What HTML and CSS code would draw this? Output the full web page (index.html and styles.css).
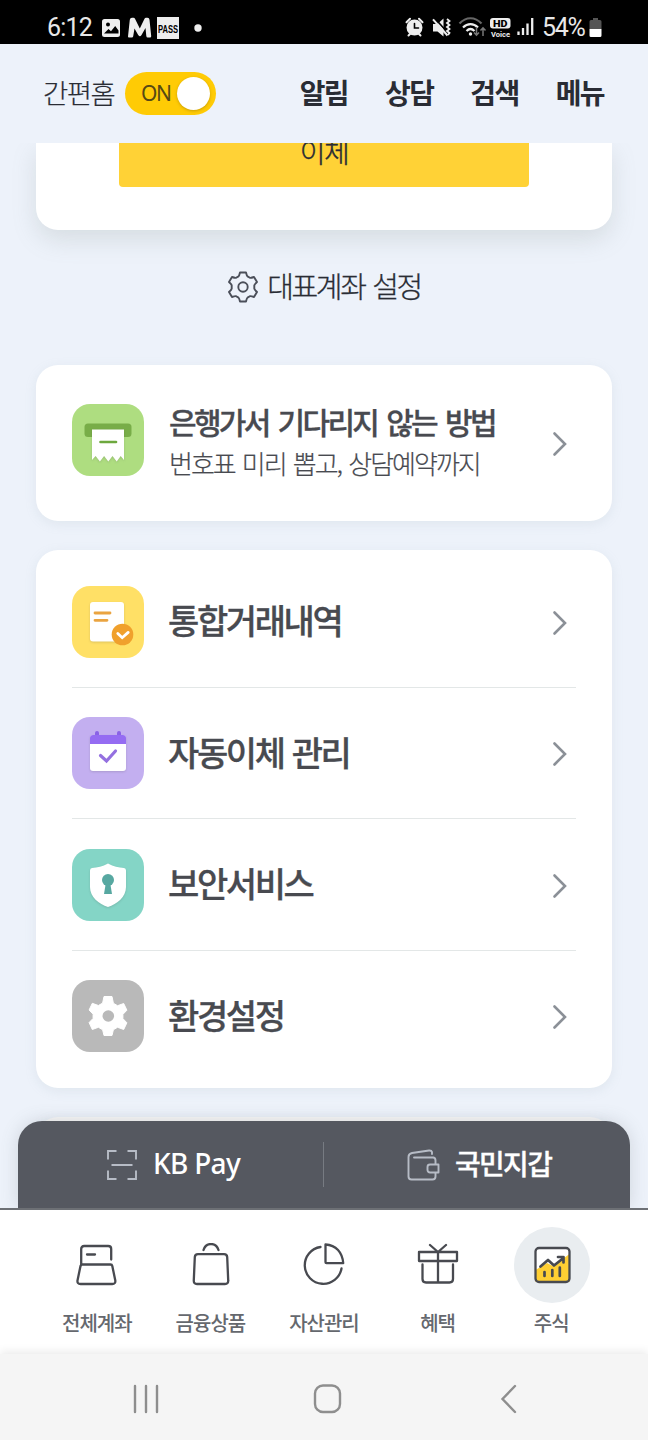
FILE: index.html
```
<!DOCTYPE html>
<html lang="ko">
<head>
<meta charset="utf-8">
<title>간편홈</title>
<link rel="stylesheet" href="styles.css">
</head>
<body>
<div class="phone">
  <div class="status">
    <span class="status-text clock">6:12</span>
    <svg class="status-left" width="110" height="24" viewBox="0 0 110 24">
      <rect x="1" y="3" width="18" height="18" rx="2.5" fill="#eee"/>
      <circle cx="7" cy="8.500" r="2" fill="#000"/>
      <path d="M3 17.500 7.500 13l2.500 2.200 4.200-5.200 3.300 4.500v3z" fill="#000"/>
      <path d="M27 20.500 28.800 3.800q.3-2 2.200-2h1.500q1 0 1.500 1L38.800 12.500 43.500 2.800q.5-1 1.500-1h1.500q1.800 0 2 2L50.200 20q.2 1.500-1.300 1.500h-2.200q-1.200 0-1.400-1.500L44.500 12l-4 7q-1.500 2.500-3.300 0L33.500 12.500 32.200 20.300q-.2 1.200-1.400 1.200H28q-1.100 0-1-1z" fill="#eee"/>
      <rect x="56" y="1" width="22" height="22" fill="#eee"/>
      <text x="57" y="16.500" class="pass" textLength="20" lengthAdjust="spacingAndGlyphs">PASS</text>
      <circle cx="97" cy="12" r="3.700" fill="#eee"/>
    </svg>
    <svg class="status-right" width="130" height="24" viewBox="0 0 130 24">
      <g stroke="#eee" fill="none" stroke-width="2" stroke-linecap="round">
        <circle cx="9.500" cy="11.500" r="7" fill="#eee"/>
        <path d="M1.500 6.200 5 2.800M17.500 6.200 14 2.800M3.500 19.500l2-2M15.500 19.500l-2-2"/>
        <path d="M9.500 7.500v4.500h4" stroke="#000" stroke-width="1.600"/>
      </g>
      <path d="M28 8h4.500l6-5.500v18l-6-5H28z" fill="#eee"/>
      <path d="M29.500 2 43.500 17.500" stroke="#000" stroke-width="1.800"/>
      <path d="M28 3.300 42.500 19.500" stroke="#eee" stroke-width="2"/>
      <path d="M42 3l2.500 2-2.500 2 2.500 2-2.500 2 2.500 2-2.500 2 2.500 2-1.500 2" stroke="#eee" stroke-width="1.800" fill="none"/>
      <g fill="none" stroke-width="2.200">
        <path d="M54.500 7.500C61 .5 70 .5 76.500 7.500" stroke="#666"/>
        <path d="M58 11.500c4.500-4.500 10.500-4.500 15 0M61.500 15c2.500-2.500 5.500-2.500 8 0" stroke="#eee"/>
        <path d="M71.500 11v8m-2.500-2.500 2.500 2.700 2.500-2.700M78 20v-8m-2.500 2.500 2.500-2.700 2.500 2.700" stroke="#777" stroke-width="1.500"/>
      </g>
      <circle cx="65.500" cy="18" r="1.700" fill="#eee"/>
      <rect x="85" y="2" width="20.500" height="10.500" rx="3" fill="#eee"/>
      <text x="88" y="10.600" class="hd" textLength="14.500" lengthAdjust="spacingAndGlyphs">HD</text>
      <text x="86" y="20.500" class="voice" textLength="19" lengthAdjust="spacingAndGlyphs">Voice</text>
      <path d="M113.500 19v-3.500M118 19v-7M122.500 19V7.500M127.200 19V2" stroke="#eee" stroke-width="2.300"/>
    </svg>
    <span class="status-text percent">54%</span>
    <svg class="battery" width="13" height="20" viewBox="0 0 13 20"><path d="M4 0h5v2H4zM2 2h9a1.500 1.500 0 0 1 1.500 1.500V11H.5V3.500A1.500 1.500 0 0 1 2 2z" fill="#555"/><path d="M.5 11h12v6.500A1.500 1.500 0 0 1 11 19H2a1.500 1.500 0 0 1-1.500-1.500z" fill="#fff"/></svg>
  </div>

  <header class="header">
    <span class="mode">간편홈</span>
    <div class="toggle"><span class="toggle-label">ON</span><span class="knob"></span></div>
    <nav class="top-menu"><span>알림</span><span>상담</span><span>검색</span><span>메뉴</span></nav>
  </header>

  <main class="content">
    <section class="account-card"><div class="transfer"><span>이체</span></div></section>
    <div class="account-setting">
      <svg width="32" height="32" viewBox="0 0 32 32" fill="none" stroke="#4b4f59" stroke-width="1.900" stroke-linejoin="round">
        <path d="M13 1.500h6q.8 3.300 1.500 3.900l2.400 1.400q1 .3 4.100-.8l3 5q-2.600 2.500-2.700 3.400v3.200q.1 1 2.700 3.400l-3 5q-3.100-1.100-4.100-.8l-2.400 1.400q-.7.600-1.500 3.900h-6q-.8-3.300-1.500-3.900l-2.400-1.400q-1-.3-4.100.8l-3-5q2.600-2.400 2.700-3.400v-3.200q-.1-.9-2.700-3.400l3-5q3.100 1.100 4.100.8l2.400-1.400q.7-.6 1.500-3.900z"/><circle cx="16" cy="16" r="4.700"/>
      </svg>
      <span>대표계좌 설정</span>
    </div>

    <section class="card promo">
      <svg class="tile" viewBox="0 0 72 72">
        <rect width="72" height="72" rx="18" fill="#aedd80"/>
        <rect x="12.500" y="19.500" width="47" height="13.500" rx="3.500" fill="#78ad48"/>
        <path class="soft" d="M20 25.500h32V56l-3.300-4-4 5.500-4.200-5.500-4.200 5.500-4.200-5.500-4.200 5.500-4.300-5.500-3.600 4z" fill="#fff"/>
        <path d="M28.500 38H44" stroke="#6da83e" stroke-width="2.600" stroke-linecap="round"/>
      </svg>
      <div class="promo-text"><strong>은행가서 기다리지 않는 방법</strong><span>번호표 미리 뽑고, 상담예약까지</span></div>
      <svg class="chevron" viewBox="0 0 16 26"><path d="M2.500 2.500 13 13 2.500 23.500"/></svg>
    </section>

    <section class="card menu">
      <div class="row">
        <svg class="tile" viewBox="0 0 72 72">
          <rect width="72" height="72" rx="18" fill="#ffe066"/>
          <rect class="soft" x="18" y="16" width="34" height="39.500" rx="3" fill="#fff"/>
          <path d="M23 27h15M23 34.300h12" stroke="#eaa441" stroke-width="2.800" stroke-linecap="round"/>
          <circle cx="50.500" cy="48.500" r="10.800" fill="#f0a02c"/>
          <path d="m45.800 47.500 4.400 4.200 6-5.300" fill="none" stroke="#fff" stroke-width="2.800" stroke-linecap="round"/>
        </svg>
        <span>통합거래내역</span><svg class="chevron" viewBox="0 0 16 26"><path d="M2.500 2.500 13 13 2.500 23.500"/></svg>
      </div>
      <div class="row">
        <svg class="tile" viewBox="0 0 72 72">
          <rect width="72" height="72" rx="18" fill="#c3aff0"/>
          <rect class="soft" x="18" y="18" width="36" height="36" rx="3" fill="#fff"/>
          <path d="M25 16v5M47 16v5" stroke="#8a62e6" stroke-width="4" stroke-linecap="round"/>
          <path d="M18 27v-6a3 3 0 0 1 3-3h30a3 3 0 0 1 3 3v6z" fill="#956cf2"/>
          <path d="m28.500 38.500 6 5.500L43.500 34" fill="none" stroke="#9470e0" stroke-width="3.200" stroke-linecap="round"/>
        </svg>
        <span>자동이체 관리</span><svg class="chevron" viewBox="0 0 16 26"><path d="M2.500 2.500 13 13 2.500 23.500"/></svg>
      </div>
      <div class="row">
        <svg class="tile" viewBox="0 0 72 72">
          <rect width="72" height="72" rx="18" fill="#84d5c6"/>
          <path class="soft" d="M36 14.500c5.500 3 10.500 4 16 4.500q2 .3 2 2.500V38c0 10-9 17-18 20C27 55 18 48 18 38V21.500q0-2.200 2-2.500c5.500-.5 10.500-1.500 16-4.500z" fill="#fff"/>
          <circle cx="36" cy="31" r="6" fill="#57a8a1"/><path d="M34 33h4l2 12h-8z" fill="#57a8a1"/>
        </svg>
        <span>보안서비스</span><svg class="chevron" viewBox="0 0 16 26"><path d="M2.500 2.500 13 13 2.500 23.500"/></svg>
      </div>
      <div class="row">
        <svg class="tile" viewBox="0 0 72 72">
          <rect width="72" height="72" rx="18" fill="#b9b9b9"/>
          <path d="M32 16.500h8l1.400 6.800 4.200 2.400 6.100-2.200 3.200 6.700-4 4.200v4.200l4 4.200-3.200 6.700-6.100-2.200-4.200 2.400L40 55.500h-8l-1.400-5.800-4.200-2.400-6.100 2.200-3.200-6.900 4-4.200v-4.200l-4-4.200 3.200-6.700 6.100 2.200 4.200-2.400z" fill="#fff" stroke="#fff" stroke-linejoin="round"/>
          <circle cx="36.300" cy="36" r="5.800" fill="#b9b9b9"/>
        </svg>
        <span>환경설정</span><svg class="chevron" viewBox="0 0 16 26"><path d="M2.500 2.500 13 13 2.500 23.500"/></svg>
      </div>
    </section>
    <section class="card next-card"></section>

    <div class="pay-bar">
      <div class="pay-item kb">
        <svg width="30" height="30" viewBox="0 0 30 30" fill="none" stroke="#b7bcc6" stroke-width="1.900"><path d="M1 9.500V1h8.500M20.500 1H29v8.500M29 20.500V29h-8.500M9.500 29H1v-8.500M4.500 15h21"/></svg>
        <span>KB Pay</span>
      </div>
      <div class="pay-item wallet">
        <svg width="33" height="32" viewBox="0 0 33 32" fill="none" stroke="#b7bcc6" stroke-width="1.900" stroke-linecap="round" stroke-linejoin="round"><path d="M25 5V3q-.5-1.700-3-1.500L5 4Q1.500 4.700 1.500 8v19.500q0 3 3 3h21q3 0 3-3V24M7 8.500h19.500q2 .5 2 3V15M31.500 15.500v8H23a2.500 2.500 0 0 1-2.500-2.500v-3a2.500 2.500 0 0 1 2.500-2.500z"/></svg>
        <span>국민지갑</span>
      </div>
    </div>
  </main>

  <nav class="tabs">
    <div class="tab"><div class="tab-icon"><svg viewBox="0 0 44 44"><path d="M6.200 21.500V6q0-3 3-3h24q3 0 3 3v10.500M12 11.500h8M6.500 21.500h29q1.500 0 1.800 1.500l3 14.500q.4 3.500-3 3.500H5.500Q2 41 2.500 37.500l3-14.500z"/></svg></div><span>전체계좌</span></div>
    <div class="tab"><div class="tab-icon"><svg viewBox="0 0 44 44"><path d="M14.500 7c2.500-8 12.500-8 15 0M9 11.200h26q3 0 3.200 3l1 23q.3 3.800-3.200 3.800H8q-3.500 0-3.200-3.800l1-23q.2-3 3.200-3z"/></svg></div><span>금융상품</span></div>
    <div class="tab"><div class="tab-icon"><svg viewBox="0 0 44 44"><path d="M18.500 4A18.500 18.500 0 1 0 39.500 25.500M23.500 1.500v17.700q0 1 1 1h16.700C40.500 9.500 34 2 23.500 1.500z"/></svg></div><span>자산관리</span></div>
    <div class="tab"><div class="tab-icon"><svg viewBox="0 0 44 44"><path d="M3 9h38v9H3zM6.500 21.500V36q0 3.500 3.500 3.500h23.500q3.500 0 3.500-3.500V21.500M22 9v30M14 2l8 7 8-7"/></svg></div><span>혜택</span></div>
    <div class="tab"><div class="tab-icon active"><svg viewBox="0 0 44 44"><rect x="5.500" y="5" width="34" height="34" rx="3.500" fill="#fff" stroke="none"/><path d="M5.500 27 17 20l6 3 16.500-12v28h-34z" fill="#ffcf33" stroke="none"/><rect x="5.500" y="5" width="34" height="34" rx="3.500"/><path d="m10.500 23.500 7.500-6.500 6 5.500L33.500 15M28 14h5.500v5.500M14.500 33v-4M22.300 33v-6M29.800 33v-8.500" stroke-width="2.700"/></svg></div><span>주식</span></div>
  </nav>

  <div class="system-nav">
    <svg width="30" height="30" viewBox="0 0 30 30"><path d="M4 2v26M15 2v26M26 2v26"/></svg>
    <svg width="30" height="30" viewBox="0 0 30 30"><rect x="2" y="1.500" width="25" height="26.500" rx="8"/></svg>
    <svg width="30" height="30" viewBox="0 0 30 30"><path d="M21 2 8.500 15 21 28"/></svg>
  </div>
</div>
</body>
</html>
```
FILE: styles.css
```
* { box-sizing: border-box; }
body { margin: 0; font-family: "Noto Sans CJK KR", sans-serif; color: #292c34; }
svg { display: block; flex: none; }
span, strong { white-space: nowrap; }

.phone { width: 648px; height: 1440px; display: flex; flex-direction: column; background: #edf2fa; overflow: hidden; }

.status { height: 44px; flex: none; display: flex; align-items: center; background: #000; padding: 11px 46px 0 47px; }
.status-text { font: 400 25px/26px Roboto, sans-serif; color: #e8e8e8; }
.clock { width: 54px; letter-spacing: -.8px; }
.status-right { margin-left: auto; }
.percent { margin-left: 7px; width: 47px; letter-spacing: -1.300px; }
.pass { font: 700 10.500px "Liberation Sans", sans-serif; fill: #000; }
.hd { font: 900 9.500px Roboto, sans-serif; fill: #000; }
.voice { font: 700 8px Roboto, sans-serif; fill: #eee; }

.header { height: 99px; flex: none; display: flex; align-items: center; padding: 0 44px 0 43px; }
.mode { width: 82px; padding-bottom: 3px; font-size: 27.500px; font-weight: 300; letter-spacing: -1.600px; -webkit-text-stroke: .2px; }
.toggle { width: 91px; height: 43px; border-radius: 22px; background: #ffcb05; display: flex; align-items: center; justify-content: space-between; padding: 0 6px 0 16px; }
.toggle-label { padding-bottom: 2px; font: 400 21px "Noto Sans", sans-serif; letter-spacing: -1.500px; color: #564914; }
.knob { width: 33px; height: 33px; border-radius: 50%; background: #fff; box-shadow: 0 1px 3px rgba(120, 90, 0, .4); }
.top-menu { margin-left: auto; padding-bottom: 3px; display: flex; gap: 37px; font-size: 28px; font-weight: 700; letter-spacing: -1.600px; }

.content { height: 1065px; flex: none; position: relative; overflow: hidden; padding: 0 36px; }
.account-card { height: 87px; padding: 0 83px; background: #fff; border-radius: 0 0 22px 22px; box-shadow: 0 10px 24px rgba(125, 140, 135, .2); }
.transfer { height: 44px; overflow: hidden; display: flex; justify-content: center; align-items: flex-start; background: #ffd236; border-radius: 0 0 4px 4px; }
.transfer span { font-size: 28px; line-height: 40px; margin-top: -12px; letter-spacing: -1.500px; font-weight: 300; -webkit-text-stroke: .4px; }
.account-setting { height: 135px; padding-bottom: 21px; display: flex; align-items: center; justify-content: center; gap: 8px; font-size: 29px; font-weight: 300; letter-spacing: -2.400px; word-spacing: 2px; -webkit-text-stroke: .3px; }
.account-setting span { padding-bottom: 4px; }

.card { background: #fff; border-radius: 22px; box-shadow: 0 3px 12px rgba(140, 160, 170, .14); }
.tile { width: 72px; height: 72px; }
.soft { filter: drop-shadow(0 1px 1px rgba(60, 60, 60, .18)); }
.promo { height: 156px; display: flex; align-items: center; padding: 0 44px 6px 36px; }
.promo-text { margin-left: 25px; padding-top: 2px; display: flex; flex-direction: column; color: #484a50; }
.promo-text strong { font-size: 30px; line-height: 42px; font-weight: 500; letter-spacing: -2.700px; word-spacing: 3.300px; -webkit-text-stroke: .3px; }
.promo-text span { font-size: 26px; line-height: 41px; font-weight: 300; letter-spacing: -2px; word-spacing: 1.800px; -webkit-text-stroke: .2px; }
.chevron { width: 16px; height: 26px; margin-left: auto; fill: none; stroke: #8b9097; stroke-width: 2.600; stroke-linecap: round; }
.promo .chevron { margin-top: 7px; }
.menu { margin-top: 28.500px; padding: 36px; }
.row { display: flex; align-items: center; padding-right: 8px; }
.row .chevron { margin-top: 2px; }
.row + .row { margin-top: 29px; padding-top: 29.500px; border-top: 1px solid #e3e7e7; }
.row > span { margin-left: 24px; padding-bottom: 3px; font-size: 34px; line-height: 50px; font-weight: 500; letter-spacing: -2.400px; word-spacing: 1px; color: #484a50; -webkit-text-stroke: .3px; }
.next-card { margin-top: 29px; height: 150px; background: #f6f6f6; }

.pay-bar { position: absolute; left: 18px; right: 18px; bottom: 0; height: 87px; display: flex; align-items: center; background: #555860; border-radius: 24px 24px 0 0; box-shadow: 0 0 18px rgba(90, 100, 105, .2); color: #fff; }
.pay-item { width: 50%; height: 45px; display: flex; align-items: center; }
.pay-item span { padding-bottom: 3px; }
.kb { padding-left: 89px; gap: 16px; border-right: 1px solid #777b82; font: 500 28px "Noto Sans", sans-serif; letter-spacing: -.7px; }
.wallet { padding-left: 83px; gap: 15px; font-size: 28px; font-weight: 500; letter-spacing: -1.700px; -webkit-text-stroke: .3px; }

.tabs { height: 146px; flex: none; display: flex; padding: 17px 40px 0; background: #fff; border-top: 2px solid #6d7075; }
.tab { flex: 1; display: flex; flex-direction: column; align-items: center; font-size: 20px; line-height: 30px; font-weight: 500; letter-spacing: -1px; color: #65686e; }
.tab-icon { width: 76px; height: 76px; margin: 0 0 5px 1px; display: flex; align-items: center; justify-content: center; border-radius: 50%; }
.tab-icon svg { width: 44px; height: 44px; fill: none; stroke: #484a50; stroke-width: 2.300; stroke-linecap: round; stroke-linejoin: round; }
.active { background: #e9edf0; }

.system-nav { height: 86px; flex: none; display: flex; align-items: center; justify-content: space-between; padding: 3px 124px 0 131px; background: #f5f5f5; box-shadow: 0 -2px 9px rgba(0, 0, 0, .09); }
.system-nav svg { fill: none; stroke: #8e8e8e; stroke-width: 2.400; stroke-linecap: round; }
```
